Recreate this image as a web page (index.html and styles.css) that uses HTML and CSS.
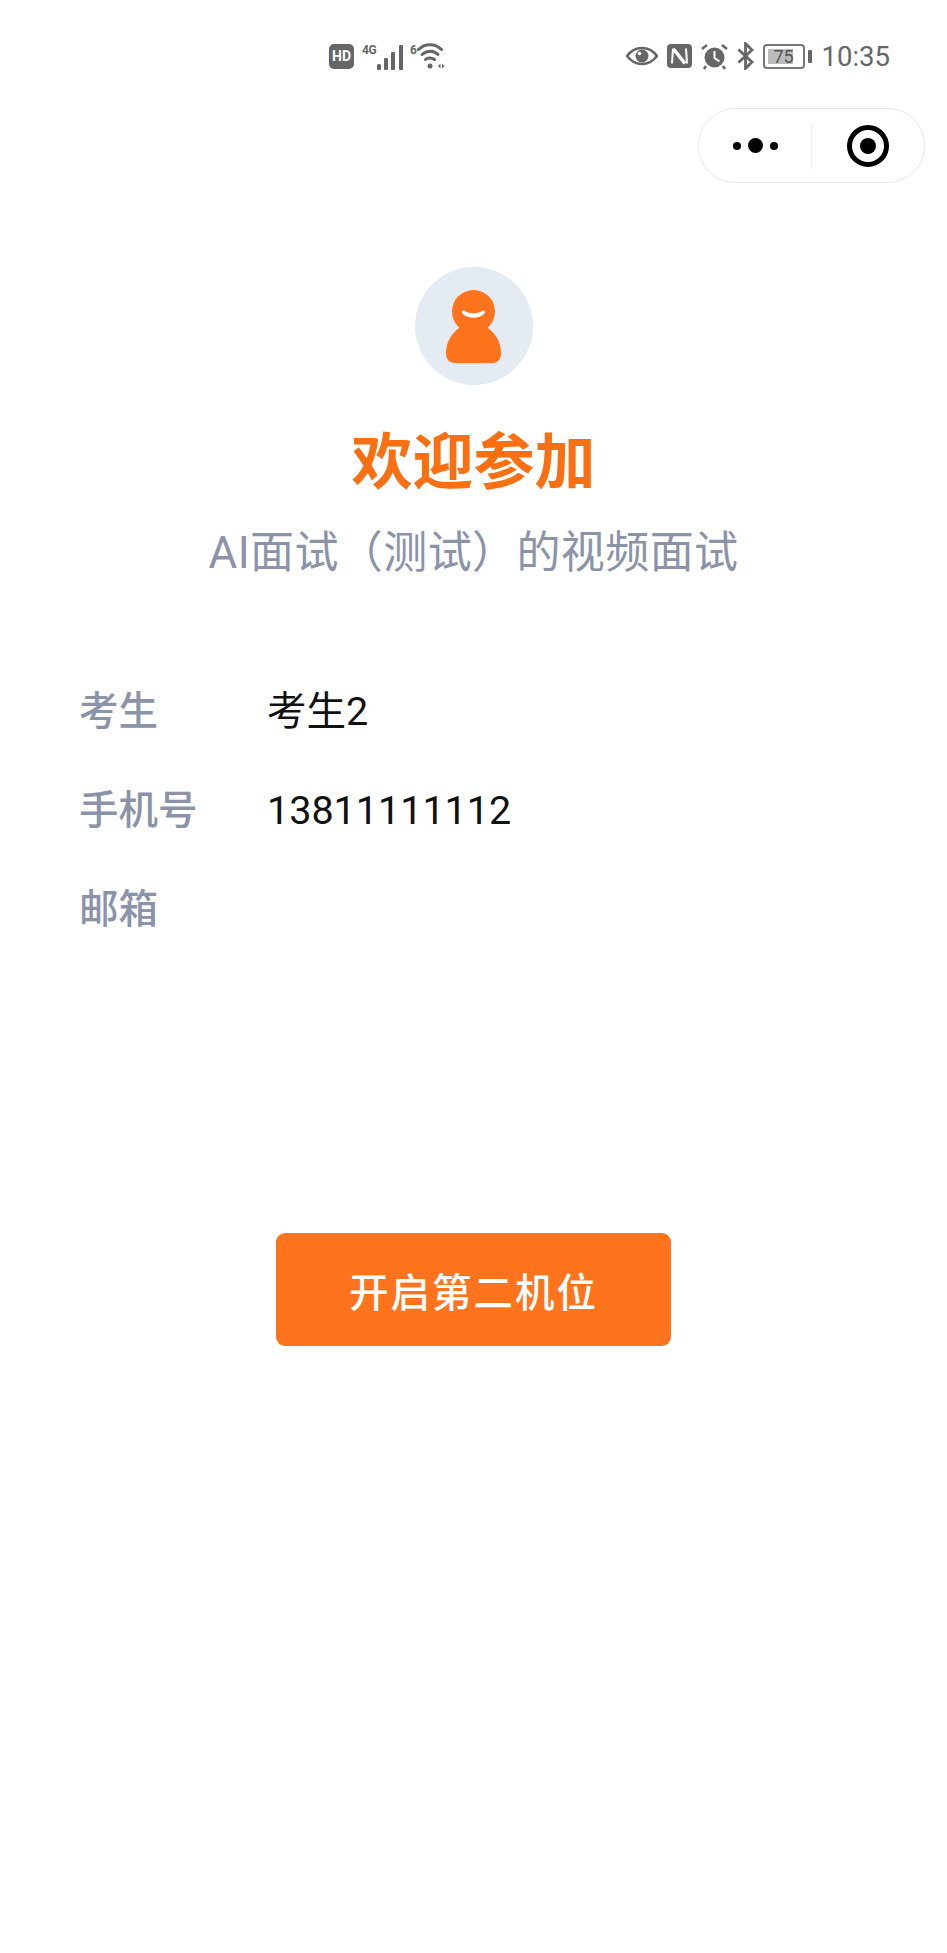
FILE: index.html
```html
<!DOCTYPE html>
<html lang="zh-CN">
<head>
    <meta charset="UTF-8">
    <meta name="viewport" content="width=device-width, initial-scale=1.0">
    <title>欢迎参加</title>
    <link rel="stylesheet" href="styles.css">
</head>
<body>
    <!-- Status bar -->
    <div class="status-bar">
        <div class="status-left">
            <span class="hd">HD</span>
            <span class="net-label">4G</span>
            <svg class="signal" width="27" height="26" viewBox="0 0 27 26">
                <rect x="0" y="20" width="4" height="6" rx="1.5"/>
                <rect x="7" y="14" width="4" height="12" rx="1"/>
                <rect x="14" y="8" width="4" height="18" rx="1"/>
                <rect x="22" y="1" width="4" height="25" rx="1"/>
            </svg>
            <span class="net-label wifi-label">6</span>
            <svg class="wifi" width="29" height="28" viewBox="0 0 29 28" fill="none" stroke="#666" stroke-width="3" stroke-linecap="round">
                <path d="M1.500 7.500C8 1 18 1 24.500 7.500"/>
                <path d="M5 12.500C9.500 8 17 8 21 12.500"/>
                <path d="M8.500 17.500C10.500 15.500 15 15.500 17.500 17.500"/>
                <circle cx="13" cy="24" r="2.500" fill="#666" stroke="none"/>
                <path d="M23.500 21.500l-2.500 2.500 2.500 2.500zM25 21.500l2.500 2.500-2.500 2.500z" fill="#666" stroke="none"/>
            </svg>
        </div>
        <div class="status-right">
            <svg width="32" height="20" viewBox="0 0 32 20">
                <path d="M16 2C9 2 4 6 1 10c3 4 8 8 15 8s12-4 15-8c-3-4-8-8-15-8z" fill="none" stroke="#666" stroke-width="2.600"/>
                <circle cx="16" cy="10" r="6.500" fill="#666"/>
                <circle cx="13.500" cy="7.500" r="1.800" fill="#fff"/>
            </svg>
            <svg width="25" height="24" viewBox="0 0 25 24">
                <rect width="25" height="24" rx="4" fill="#666"/>
                <path d="M6 4.500L5 19.500M19 4.500L20 19.500" fill="none" stroke="#fff" stroke-width="2"/>
                <path d="M6.500 5L18 19.500" fill="none" stroke="#fff" stroke-width="3.500"/>
            </svg>
            <svg width="27" height="27" viewBox="0 0 27 27">
                <circle cx="13.500" cy="14.500" r="10" fill="#666"/>
                <path d="M13.500 8v7l5 3.500" fill="none" stroke="#fff" stroke-width="2"/>
                <path d="M1 6l5-4M26 6l-5-4M5 23l-2 3M22 23l2 3" stroke="#666" stroke-width="2.500" fill="none"/>
            </svg>
            <svg width="17" height="28" viewBox="0 0 17 28" fill="none" stroke="#666" stroke-width="2.800">
                <path d="M1.500 7.500L15 20l-6.500 6.500V1.500L15 8 1.500 20.500"/>
            </svg>
            <div class="battery">
                <div class="battery-body">
                    <span class="battery-fill"></span>
                    <span class="battery-num">75</span>
                </div>
                <span class="battery-cap"></span>
            </div>
            <span class="clock">10:35</span>
        </div>
    </div>

    <!-- Mini program capsule -->
    <div class="capsule-row">
        <div class="capsule">
            <div class="capsule-part">
                <span class="dot"></span>
                <span class="dot dot-big"></span>
                <span class="dot"></span>
            </div>
            <div class="capsule-line"></div>
            <div class="capsule-part">
                <span class="target"></span>
            </div>
        </div>
    </div>

    <div class="welcome">
        <div class="avatar">
            <svg width="55" height="73" viewBox="0 0 55 73">
                <circle cx="27.500" cy="21.500" r="21.500" fill="#ff731d"/>
                <path d="M9 73C3 73 0 69 0 63C0 52 6 42 15 37L40 37C49 42 55 52 55 63C55 69 52 73 46 73Z" fill="#ff731d"/>
                <path d="M16 21.500c.5-1 2-1.500 3-.5 4 3 13 3 17 0 1-1 2.500-.5 3 .5.300 1-.5 2-1 2.500-5 5-16 5-21 0-.5-.5-1.300-1.500-1-2.500z" fill="#fff"/>
            </svg>
        </div>
        <h1>欢迎参加</h1>
        <p class="subtitle">AI面试（测试）的视频面试</p>
    </div>

    <div class="info">
        <div class="info-row">
            <span class="info-label">考生</span>
            <span class="info-value">考生2</span>
        </div>
        <div class="info-row">
            <span class="info-label">手机号</span>
            <span class="info-value">13811111112</span>
        </div>
        <div class="info-row">
            <span class="info-label">邮箱</span>
            <span class="info-value"></span>
        </div>
    </div>

    <div class="actions">
        <button type="button" class="start-btn">开启第二机位</button>
    </div>
</body>
</html>
```

FILE: styles.css
```css
body {
    font-family: "Roboto", "Noto Sans CJK SC", sans-serif;
    margin: 0;
    padding: 0;
    height: 1953px;
    overflow: hidden;
    background: #fff;
    color: #000;
}

/* Status bar */
.status-bar {
    display: flex;
    justify-content: space-between;
    align-items: center;
    height: 30px;
    padding: 41px 57px 0 329px;
    color: #666;
}

.status-left,
.status-right {
    display: flex;
    align-items: center;
}

.hd {
    width: 25px;
    height: 25px;
    border-radius: 5px;
    background: #666;
    color: #fff;
    font-size: 14px;
    font-weight: 700;
    line-height: 25px;
    text-align: center;
}

.net-label {
    margin: -12px 0 0 8px;
    font-size: 12px;
    font-weight: 700;
    letter-spacing: -0.5px;
}

.signal {
    fill: #666;
    margin: 2px 0 0 1px;
}

.wifi-label {
    margin-left: 6px;
}

.wifi {
    margin-left: 1px;
}

.status-right {
    gap: 9px;
}

.battery {
    display: flex;
    align-items: center;
    gap: 3px;
}

.battery-body {
    position: relative;
    width: 38px;
    height: 21px;
    border: 2px solid #777;
    border-radius: 4px;
    font-size: 18px;
    line-height: 21px;
    text-align: center;
    color: #555;
}

.battery-fill {
    position: absolute;
    left: 3px;
    top: 3px;
    bottom: 3px;
    width: 25px;
    background: #bbb;
}

.battery-num {
    position: relative;
}

.battery-cap {
    width: 4px;
    height: 13px;
    border-radius: 1px;
    background: #666;
}

.clock {
    font-size: 27.5px;
    margin-left: 1px;
}

/* Capsule */
.capsule-row {
    display: flex;
    justify-content: flex-end;
    padding: 37px 22px 0 0;
}

.capsule {
    display: flex;
    align-items: center;
    width: 225px;
    height: 73px;
    border: 1px solid #e8e8e8;
    border-radius: 37px;
}

.capsule-part {
    flex: 1;
    display: flex;
    justify-content: center;
    align-items: center;
    gap: 7px;
}

.capsule-line {
    width: 1px;
    height: 46px;
    background: #efefef;
}

.dot {
    width: 8px;
    height: 8px;
    border-radius: 50%;
    background: #000;
}

.dot-big {
    width: 15px;
    height: 15px;
}

.target {
    position: relative;
    width: 32px;
    height: 32px;
    border: 5.5px solid #000;
    border-radius: 50%;
}

.target::after {
    content: "";
    position: absolute;
    top: 8px;
    left: 8px;
    width: 16px;
    height: 16px;
    border-radius: 50%;
    background: #000;
}

/* Welcome header */
.welcome {
    display: flex;
    flex-direction: column;
    align-items: center;
    padding-top: 84px;
}

.avatar {
    display: flex;
    justify-content: center;
    align-items: center;
    width: 118px;
    height: 118px;
    border-radius: 50%;
    background: #e4ebf3;
}

h1 {
    margin: 42px 0 0 0;
    font-size: 61px;
    line-height: 72px;
    font-weight: 700;
    color: #f96f12;
}

.subtitle {
    margin: 24px 0 0 0;
    font-size: 44px;
    line-height: 60px;
    letter-spacing: 0.4px;
    color: #8a93a8;
}

/* Candidate info */
.info {
    padding: 76px 0 0 79px;
}

.info-row {
    display: flex;
    align-items: baseline;
    box-sizing: border-box;
    height: 99px;
    padding-top: 20px;
    font-size: 39.5px;
}

.info-label {
    width: 188px;
    font-weight: 500;
    color: #8a93a8;
}

.info-value {
    color: #111;
}

/* Button */
.actions {
    display: flex;
    justify-content: center;
    padding-top: 277px;
}

.start-btn {
    width: 395px;
    height: 113px;
    border: none;
    border-radius: 9px;
    background: #ff731d;
    color: #fff;
    font-family: inherit;
    font-size: 39.5px;
    font-weight: 500;
    letter-spacing: 2px;
    cursor: pointer;
}
```
